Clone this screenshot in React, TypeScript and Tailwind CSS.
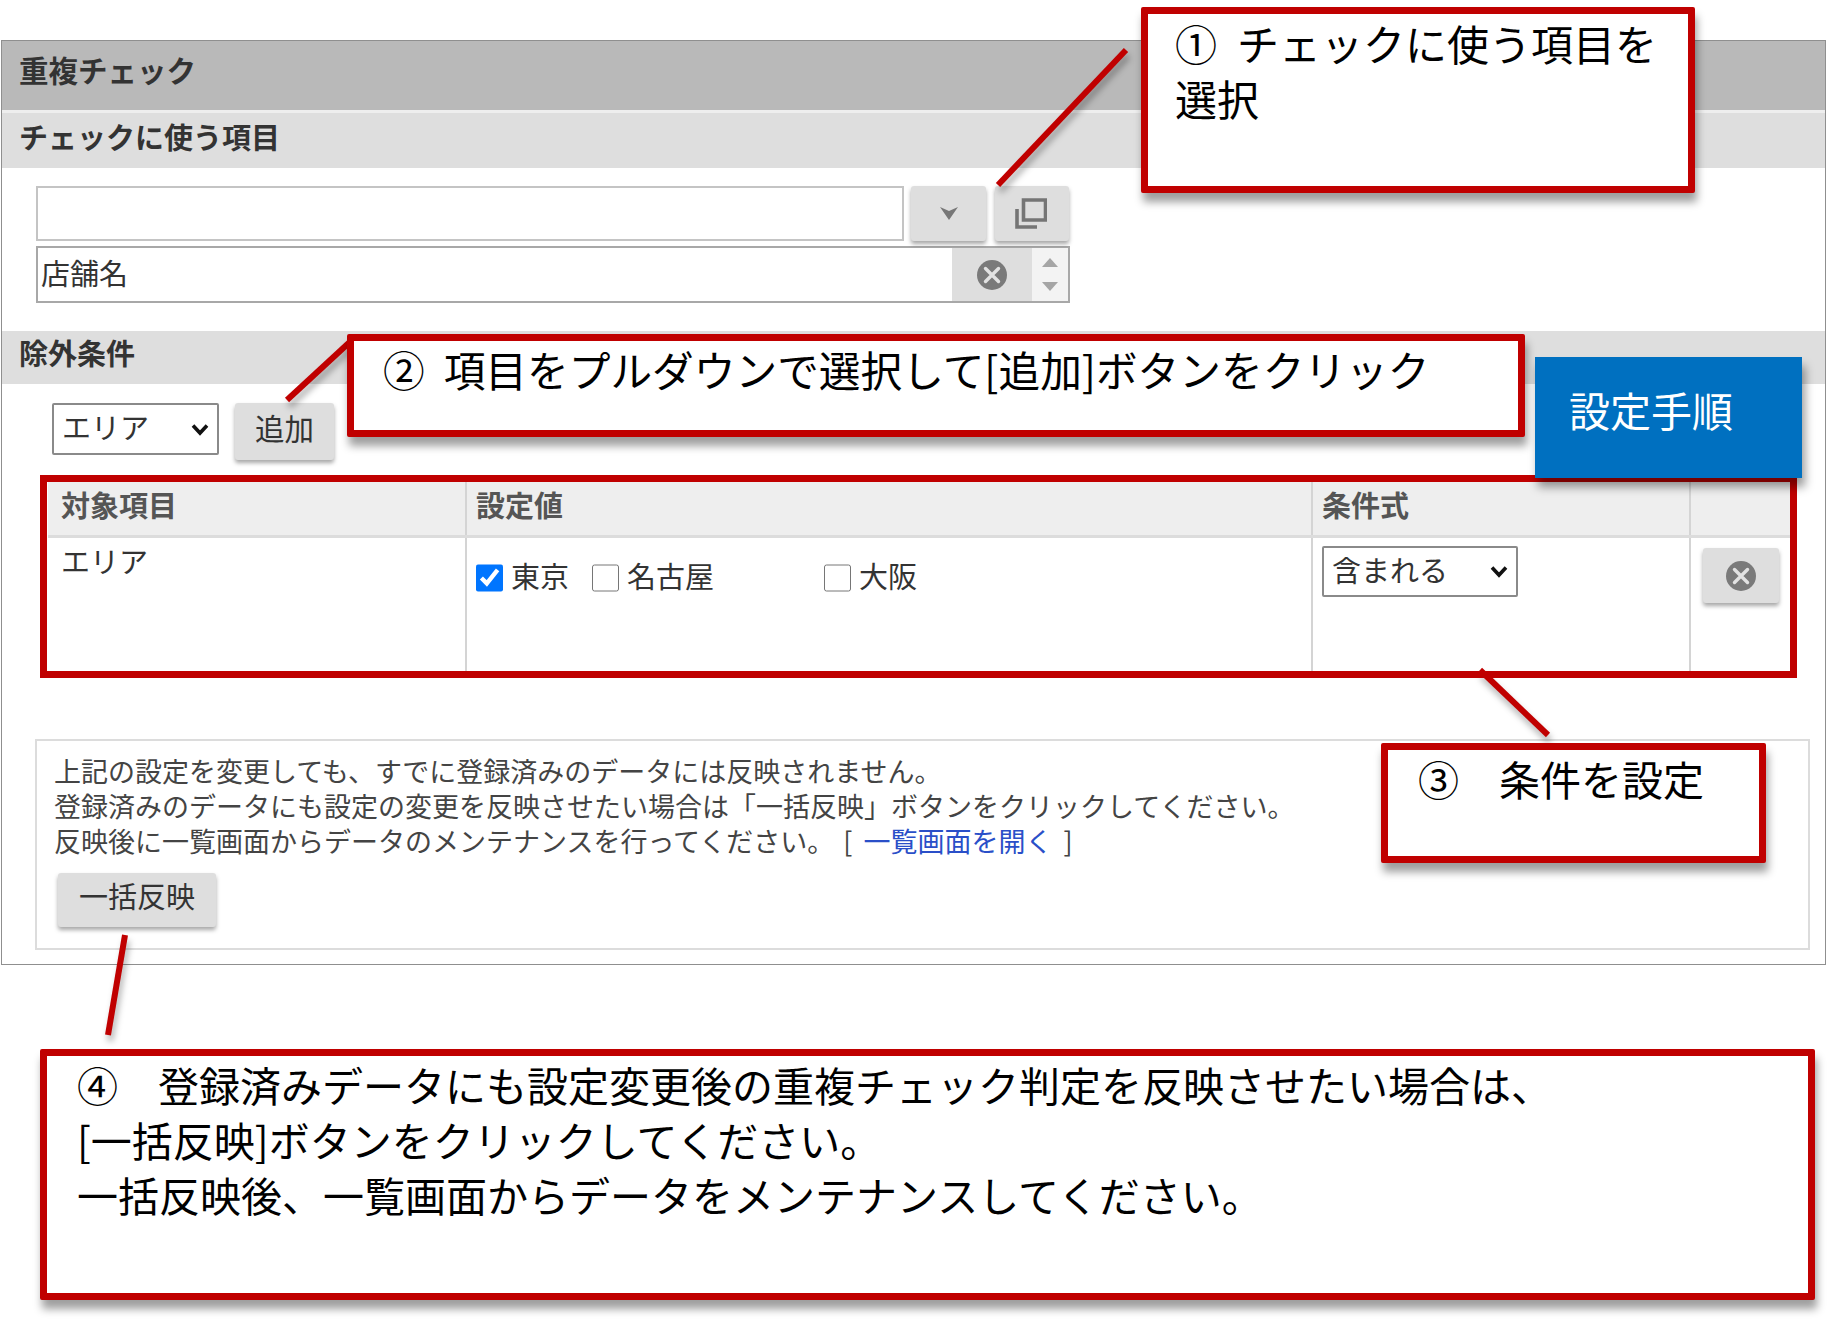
import { ReactNode } from 'react';

const ClearIcon = () => (
  <svg width="30" height="30" viewBox="0 0 30 30">
    <circle cx="15" cy="15" r="15" fill="#7a7a7a" />
    <path d="M8.5 8.5l13 13M21.5 8.5l-13 13" stroke="#e2e2e2" strokeWidth="3.4" strokeLinecap="round" />
  </svg>
);

const Chevron = () => (
  <svg width="18" height="13" viewBox="0 0 18 13">
    <path d="M2 2.5l7 7.5 7-7.5" fill="none" stroke="#111" strokeWidth="3.6" />
  </svg>
);

const Button = ({ className, children }: { className: string; children: ReactNode }) => (
  <div className={`flex items-center justify-center bg-[#dedede] rounded-[3px] shadow-[0_3px_4px_rgba(0,0,0,0.35)] ${className}`}>
    {children}
  </div>
);

const SectionBar = ({ children, className }: { children: ReactNode; className: string }) => (
  <div className={`flex items-center pl-[17px] bg-[#dedede] text-[29px] font-bold text-[#333] ${className}`}>
    {children}
  </div>
);

const Check = ({ label, checked, className }: { label: string; checked?: boolean; className: string }) => (
  <label className={`flex items-center gap-[8px] ${className}`}>
    <input type="checkbox" checked={!!checked} readOnly className="w-[27px] h-[28px] m-0 accent-[#0075ff]" />
    <span className="pb-[5px]">{label}</span>
  </label>
);

const Callout = ({ className, children }: { className: string; children: ReactNode }) => (
  <div className={`absolute bg-white border-[7px] border-[#c00000] rounded-[2px] shadow-[2px_9px_8px_rgba(0,0,0,0.38)] leading-[55px] text-black whitespace-pre ${className}`}>
    {children}
  </div>
);

const App = () => {
  return (
    <div className="relative w-[1832px] h-[1323px] overflow-hidden bg-white pt-[40px] font-['Noto_Sans_CJK_JP','Noto_Sans',sans-serif]">
      {/* screen capture */}
      <div className="ml-[1px] w-[1825px] h-[925px] border border-[#8f8f8f] text-[#333]">
        <div className="flex items-center h-[69px] pl-[17px] pb-[12px] bg-[#b9b9b9] text-[29.5px] font-bold">重複チェック</div>
        <div className="h-[3px] bg-[#eeeeee]" />
        <SectionBar className="h-[55px] pb-[7px]">チェックに使う項目</SectionBar>

        <div className="pl-[34px] pt-[18px]">
          <div className="flex">
            <div className="w-[868px] h-[55px] bg-white border-2 border-[#c4c4c4]" />
            <Button className="ml-[7px] w-[75px] h-[55px]">
              <svg width="18" height="13" viewBox="0 0 18 13">
                <path d="M0 0l9 4 9-4-9 13z" fill="#777" />
              </svg>
            </Button>
            <Button className="ml-[9px] w-[74px] h-[55px] pr-[3px]">
              <svg width="32" height="31" viewBox="0 0 32 31" fill="none" stroke="#757575" strokeWidth="3.6">
                <path d="M8.5 2h22v20h-22z" />
                <path d="M2 11v18h20" />
              </svg>
            </Button>
          </div>
          <div className="flex items-stretch mt-[5px] w-[1034px] h-[57px] border-2 border-[#a8a8a8]">
            <div className="flex-1 flex items-center pl-[3px] pb-[4px] text-[29px]">店舗名</div>
            <div className="flex items-center justify-center w-[80px] bg-[#dedede]">
              <ClearIcon />
            </div>
            <div className="flex flex-col items-center justify-center gap-[15px] w-[36px] bg-[#f3f3f3]">
              <svg width="16" height="9" viewBox="0 0 16 9"><path d="M8 0l8 9H0z" fill="#a5a5a5" /></svg>
              <svg width="16" height="9" viewBox="0 0 16 9"><path d="M8 9l8-9H0z" fill="#a5a5a5" /></svg>
            </div>
          </div>
        </div>

        <SectionBar className="mt-[28px] h-[53px] pb-[9px]">除外条件</SectionBar>

        <div className="flex items-start pl-[50px] pt-[19px]">
          <div className="flex items-center justify-between w-[167px] h-[52px] pl-[8px] pr-[8px] border-2 border-[#8a8a8a] rounded-[2px] text-[29px]">
            <span className="pb-[4px]">エリア</span>
            <Chevron />
          </div>
          <Button className="ml-[16px] w-[99px] h-[57px] pb-[9px] text-[29.5px]">追加</Button>
        </div>

        <div className="ml-[46px] mt-[22px] w-[1743px] h-[190px] text-[29px]">
          <div className="grid grid-cols-[419px_846px_378px_100px] h-[56px] bg-[#eeeeee] border-b-[3px] border-[#dcdcdc] font-bold text-[#555]">
            <div className="flex items-center pl-[13px] pb-[8px] border-r-2 border-[#d4d4d4]">対象項目</div>
            <div className="flex items-center pl-[9px] pb-[8px] border-r-2 border-[#d4d4d4]">設定値</div>
            <div className="flex items-center pl-[9px] pb-[8px] border-r-2 border-[#d4d4d4]">条件式</div>
            <div />
          </div>
          <div className="grid grid-cols-[419px_846px_378px_100px] h-[134px]">
            <div className="pl-[13px] pt-[1px] border-r-2 border-[#d4d4d4]">エリア</div>
            <div className="flex items-start pl-[9px] pt-[16px] border-r-2 border-[#d4d4d4]">
              <Check label="東京" checked className="w-[116px]" />
              <Check label="名古屋" className="w-[232px]" />
              <Check label="大阪" className="w-[100px]" />
            </div>
            <div className="pl-[9px] pt-[8px] border-r-2 border-[#d4d4d4]">
              <div className="flex items-center justify-between w-[196px] h-[51px] pl-[8px] pr-[8px] border-2 border-[#8a8a8a] rounded-[2px]">
                <span className="pb-[4px]">含まれる</span>
                <Chevron />
              </div>
            </div>
            <div className="pl-[12px] pt-[10px]">
              <Button className="w-[76px] h-[55px]">
                <ClearIcon />
              </Button>
            </div>
          </div>
        </div>

        <div className="ml-[33px] mt-[67px] w-[1775px] h-[211px] border-2 border-[#dcdcdc] pl-[17px] pt-[12px] text-[27px] leading-[35px] text-[#444]">
          <p>上記の設定を変更しても、すでに登録済みのデータには反映されません。</p>
          <p>登録済みのデータにも設定の変更を反映させたい場合は「一括反映」ボタンをクリックしてください。</p>
          <p>
            反映後に一覧画面からデータのメンテナンスを行ってください。
            <span className="ml-[9px]">[ </span>
            <a className="ml-[5px] text-[#2a4fc8]">一覧画面を開く</a>
            <span className="ml-[5px]"> ]</span>
          </p>
          <Button className="mt-[15px] ml-[4px] w-[158px] h-[54px] pb-[9px] text-[29px] text-[#333]">一括反映</Button>
        </div>
      </div>

      {/* annotations */}
      <svg className="absolute inset-0 drop-shadow-[2px_6px_3px_rgba(0,0,0,0.3)]" width="1832" height="1323" fill="none" stroke="#c00000" strokeWidth="6">
        <path d="M1126 50L998 185" />
        <path d="M352 340L287 400" />
        <path d="M1480 670L1548 735" />
        <path d="M125 935L108 1035" />
      </svg>

      <div className="absolute left-[40px] top-[475px] w-[1757px] h-[203px] border-[7px] border-[#c00000]" />

      <Callout className="left-[1141px] top-[7px] w-[554px] h-[186px] pl-[27px] pt-[1px] text-[42px]">
        ①<span className="ml-[20px]">チェックに使う項目を</span>{'\n'}選択
      </Callout>
      <Callout className="left-[347px] top-[334px] w-[1178px] h-[103px] pl-[29px] pt-[1px] text-[41.7px]">
        ②<span className="ml-[19px]">項目をプルダウンで選択して[追加]ボタンをクリック</span>
      </Callout>
      <Callout className="left-[1381px] top-[743px] w-[385px] h-[120px] pl-[30px] pt-[1px] text-[41px]">
        ③<span className="ml-[40px]">条件を設定</span>
      </Callout>
      <Callout className="left-[40px] top-[1049px] w-[1775px] h-[251px] pl-[30px] pt-[1px] text-[41px]">
        ④<span className="ml-[40px]">登録済みデータにも設定変更後の重複チェック判定を反映させたい場合は、</span>
        {'\n'}[一括反映]ボタンをクリックしてください。{'\n'}一括反映後、一覧画面からデータをメンテナンスしてください。
      </Callout>

      <div className="absolute left-[1535px] top-[357px] w-[267px] h-[121px] pl-[34px] pt-[25px] bg-[#0070c0] shadow-[3px_9px_9px_rgba(0,0,0,0.4)] text-[41px] leading-[55px] text-white">
        設定手順
      </div>
    </div>
  );
};

export default App;
